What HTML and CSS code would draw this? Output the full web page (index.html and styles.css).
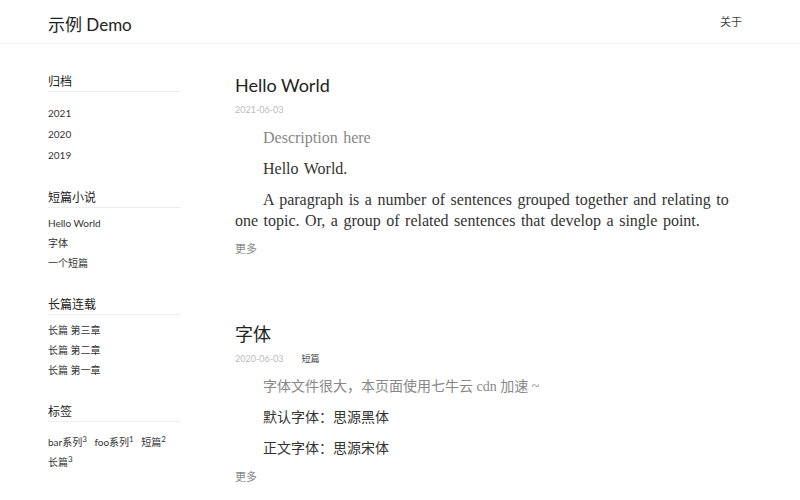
FILE: index.html
```html
<!DOCTYPE html>
<html lang="zh">
<head>
<meta charset="utf-8">
<title>示例 Demo</title>
<link rel="stylesheet" href="styles.css">
</head>
<body>
<header class="topbar">
  <div class="wrap topbar-inner">
    <a class="brand" href="#">示例 Demo</a>
    <nav class="nav"><a href="#">关于</a></nav>
  </div>
</header>
<div class="wrap layout">
  <aside class="sidebar">
    <section class="widget">
      <h3 class="widget-title">归档</h3>
      <ul class="widget-list archive">
        <li><a href="#">2021</a></li>
        <li><a href="#">2020</a></li>
        <li><a href="#">2019</a></li>
      </ul>
    </section>
    <section class="widget">
      <h3 class="widget-title">短篇小说</h3>
      <ul class="widget-list">
        <li><a href="#">Hello World</a></li>
        <li><a href="#">字体</a></li>
        <li><a href="#">一个短篇</a></li>
      </ul>
    </section>
    <section class="widget">
      <h3 class="widget-title">长篇连载</h3>
      <ul class="widget-list">
        <li><a href="#">长篇 第三章</a></li>
        <li><a href="#">长篇 第二章</a></li>
        <li><a href="#">长篇 第一章</a></li>
      </ul>
    </section>
    <section class="widget">
      <h3 class="widget-title">标签</h3>
      <div class="tags">
        <a href="#">bar系列<sup>3</sup></a>
        <a href="#">foo系列<sup>1</sup></a>
        <a href="#">短篇<sup>2</sup></a>
        <a href="#">长篇<sup>3</sup></a>
      </div>
    </section>
  </aside>
  <main class="main">
    <article class="post">
      <h2 class="post-title">Hello World</h2>
      <div class="post-meta"><span class="date">2021-06-03</span></div>
      <div class="post-body">
        <p class="desc">Description here</p>
        <p>Hello World.</p>
        <p>A paragraph is a number of sentences grouped together and relating to one topic. Or, a group of related sentences that develop a single point.</p>
      </div>
      <a class="more" href="#">更多</a>
    </article>
    <article class="post">
      <h2 class="post-title">字体</h2>
      <div class="post-meta"><span class="date">2020-06-03</span><a class="cat" href="#">短篇</a></div>
      <div class="post-body post-body-zh">
        <p class="desc">字体文件很大，本页面使用七牛云 cdn 加速 ~</p>
        <p>默认字体：思源黑体</p>
        <p>正文字体：思源宋体</p>
      </div>
      <a class="more" href="#">更多</a>
    </article>
  </main>
</div>
</body>
</html>
```
FILE: styles.css
```css
* { box-sizing: border-box; }
html, body { margin: 0; padding: 0; background: #fff; }
body {
  font-family: Lato, "Noto Sans CJK SC", sans-serif;
  color: #333;
}
a { color: inherit; text-decoration: none; }
.wrap { width: 704px; margin: 0 48px; }
.topbar { border-bottom: 1px solid #f2f2f2; height: 44px; }
.topbar-inner { display: flex; justify-content: space-between; align-items: center; height: 43px; }
.brand { font-size: 17px; color: #222; margin-top: 4px; }
.nav { font-size: 11px; color: #444; padding-right: 10px; margin-top: -2px; }
.layout { display: flex; gap: 55px; padding-top: 28px; }
.sidebar { width: 132px; flex: none; }
.widget { margin-bottom: 22px; }
.widget-title {
  font-size: 12px; font-weight: normal; color: #222;
  margin: 0; padding: 0 0 2px; border-bottom: 1px solid #eee;
}
.widget-list { list-style: none; margin: 0; padding: 5px 0 0; font-size: 10px; color: #333; }
.widget-list li { line-height: 20px; }
.archive { padding-top: 11px; }
.archive li { line-height: 21px; }
.tags { padding-top: 10px; font-size: 10px; color: #333; line-height: 20px; }
.tags a { margin-right: 5px; }
.tags sup { font-size: 8px; vertical-align: 4px; line-height: 0; }
.main { flex: 1; min-width: 0; }
.post { margin-bottom: 65px; }
.post-title { font-size: 18px; font-weight: normal; color: #222; margin: 0; line-height: 26px; }
.post-meta { font-size: 9px; color: #bbb; margin-top: 5px; line-height: 14px; }
.post-meta .cat { color: #444; margin-left: 18px; }
.post-body { font-family: "Liberation Serif", "Noto Sans CJK SC", serif; font-size: 16px; color: #333; word-spacing: 1.5px; }
.post-body-zh { font-size: 14px; word-spacing: 0; }
.post-body p { margin: 10px 0 0; line-height: 21px; text-indent: 28px; }
.post-body p:first-child { margin-top: 10px; }
.post-body .desc { color: #888; }
.more { display: inline-block; margin-top: 9px; font-size: 11px; color: #888; }
```
